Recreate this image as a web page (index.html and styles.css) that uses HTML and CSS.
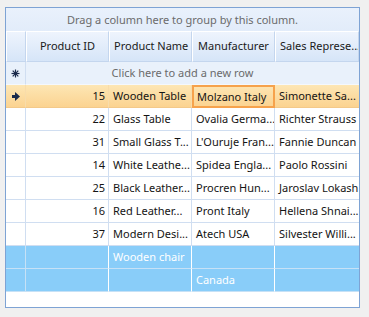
FILE: index.html
```html
<!DOCTYPE html>
<html lang="en">
<head>
  <meta charset="UTF-8" />
  <title>Products Grid</title>
  <link rel="stylesheet" href="styles.css">
</head>
<body>
  <div class="grid">
    <div class="group-panel">Drag a column here to group by this column.</div>

    <div class="row header">
      <div class="cell indicator"></div>
      <div class="cell">Product ID</div>
      <div class="cell">Product Name</div>
      <div class="cell">Manufacturer</div>
      <div class="cell last">Sales Represe...</div>
    </div>

    <div class="row new-row">
      <div class="cell indicator">
        <svg width="9" height="9" viewBox="0 0 9 9">
          <g stroke="#1a2a4a" stroke-width="1.2">
            <line x1="4.5" y1="0.5" x2="4.5" y2="8.5" />
            <line x1="0.5" y1="4.5" x2="8.5" y2="4.5" />
            <line x1="1.7" y1="1.7" x2="7.3" y2="7.3" />
            <line x1="7.3" y1="1.7" x2="1.7" y2="7.3" />
          </g>
          <circle cx="4.5" cy="4.5" r="1.8" fill="#1a2a4a" />
        </svg>
      </div>
      <div class="cell add-text">Click here to add a new row</div>
    </div>

    <div class="row current">
      <div class="cell indicator">
        <svg width="8" height="9" viewBox="0 0 8 9">
          <rect x="0" y="3" width="3" height="3" fill="#1a2a4a" />
          <polygon points="3,0 8,4.5 3,9" fill="#1a2a4a" />
        </svg>
      </div>
      <div class="cell num">15</div>
      <div class="cell">Wooden Table</div>
      <div class="cell focused">Molzano Italy</div>
      <div class="cell last">Simonette Sa...</div>
    </div>

    <div class="row">
      <div class="cell indicator"></div>
      <div class="cell num">22</div>
      <div class="cell">Glass Table</div>
      <div class="cell">Ovalia Germa...</div>
      <div class="cell last">Richter Strauss</div>
    </div>

    <div class="row">
      <div class="cell indicator"></div>
      <div class="cell num">31</div>
      <div class="cell">Small Glass T...</div>
      <div class="cell">L'Ouruje Fran...</div>
      <div class="cell last">Fannie Duncan</div>
    </div>

    <div class="row">
      <div class="cell indicator"></div>
      <div class="cell num">14</div>
      <div class="cell">White Leathe...</div>
      <div class="cell">Spidea Engla...</div>
      <div class="cell last">Paolo Rossini</div>
    </div>

    <div class="row">
      <div class="cell indicator"></div>
      <div class="cell num">25</div>
      <div class="cell">Black Leather...</div>
      <div class="cell">Procren Hun...</div>
      <div class="cell last">Jaroslav Lokash</div>
    </div>

    <div class="row">
      <div class="cell indicator"></div>
      <div class="cell num">16</div>
      <div class="cell">Red Leather...</div>
      <div class="cell">Pront Italy</div>
      <div class="cell last">Hellena Shnai...</div>
    </div>

    <div class="row">
      <div class="cell indicator"></div>
      <div class="cell num">37</div>
      <div class="cell">Modern Desi...</div>
      <div class="cell">Atech USA</div>
      <div class="cell last">Silvester Willi...</div>
    </div>

    <div class="row summary">
      <div class="cell indicator"></div>
      <div class="cell num"></div>
      <div class="cell">Wooden chair</div>
      <div class="cell"></div>
      <div class="cell last"></div>
    </div>

    <div class="row summary">
      <div class="cell indicator"></div>
      <div class="cell num"></div>
      <div class="cell"></div>
      <div class="cell">Canada</div>
      <div class="cell last"></div>
    </div>
  </div>
</body>
</html>
```

FILE: styles.css
```css
body {
  margin: 0;
  background-color: #f0f0f0;
  font-family: "Noto Sans", "Open Sans", sans-serif;
  font-size: 11px;
  color: #141414;
}
.grid {
  box-sizing: border-box;
  width: 355px;
  height: 301px;
  margin: 7px 0 0 5px;
  border: 1px solid #7ea3d4;
  background: #fff;
}
.group-panel {
  height: 23px;
  line-height: 23px;
  text-align: center;
  color: #6b6b6b;
  background: linear-gradient(#e9f1fc, #e2ecfa);
}
.row {
  display: grid;
  grid-template-columns: 20px 83px 83px 83px 84px;
  height: 23px;
}
.cell {
  box-sizing: border-box;
  height: 100%;
  padding: 0 4px;
  line-height: 22px;
  white-space: nowrap;
  overflow: hidden;
  border-right: 1px solid #d0def1;
  border-bottom: 1px solid #d0def1;
}
.cell.last {
  border-right: none;
}
.cell.num {
  text-align: right;
  padding-right: 3px;
}
.indicator {
  display: flex;
  align-items: center;
  justify-content: center;
  padding: 0;
}
.header {
  height: 31px;
}
.header .cell {
  line-height: 28px;
  text-align: center;
  color: #1a1a1a;
  background: linear-gradient(#eef4fd, #d6e5f8);
  border: 1px solid #fff;
  border-right-color: #c4d6ee;
  border-bottom-color: #c4d6ee;
}
.header .cell.last {
  border-right: 1px solid #c4d6ee;
}
.new-row {
  grid-template-columns: 20px 333px;
  background: #e9f1fb;
}
.new-row .cell {
  border-bottom-color: #f4f8fd;
}
.add-text {
  text-align: center;
  padding-right: 24px;
  color: #6b6b6b;
  border-right: none;
}
.current {
  background: linear-gradient(#fde6b4, #fbd28f);
}
.current .cell {
  border-right-color: #f8dcaa;
  border-bottom-color: #f3c98a;
}
.current .focused {
  border: 2px solid #f6a24c;
  line-height: 19px;
  padding-left: 3px;
}
.summary {
  background: #89cdf9;
}
.summary .cell {
  color: #fff;
  border-right-color: #fff;
  border-bottom-color: #c6e1f6;
}
.summary .indicator {
  border-right-color: #c6e1f6;
}
```
